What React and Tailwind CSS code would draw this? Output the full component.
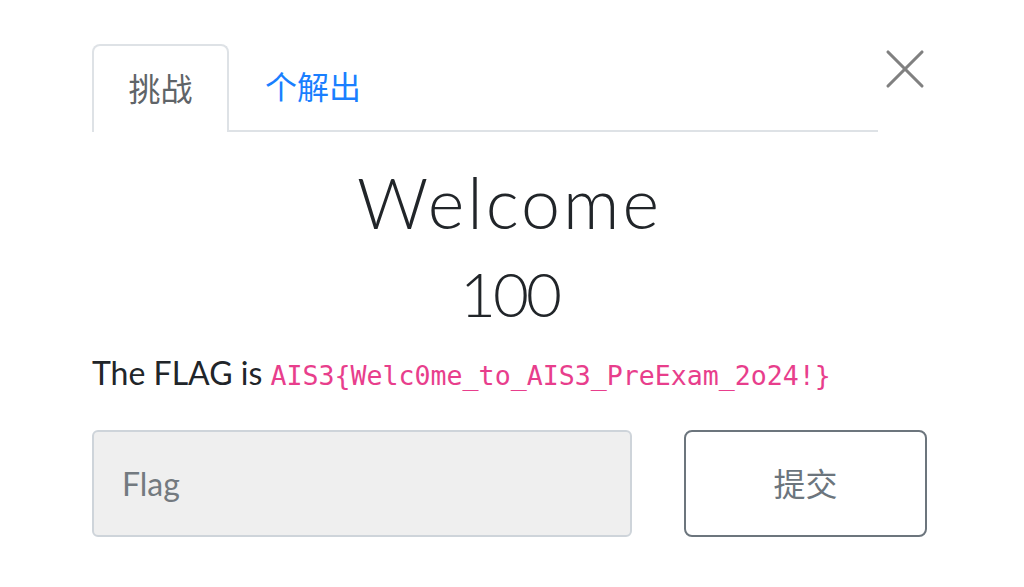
import { X } from 'lucide-react'

const lato = { fontFamily: 'Lato, "Noto Sans CJK SC", sans-serif' }

export default function App() {
  return (
    <div className="h-[587px] w-[1024px] bg-white text-[#212529]" style={lato}>
      <div className="ml-[92px] w-[835px] pt-[44px]">
        <div className="flex items-start">
          <div className="flex w-[786px] shrink-0 border-b-2 border-[#dee2e6]">
            <div className="-mb-[2px] flex h-[88px] w-[137px] items-center justify-center rounded-t-[8px] border-2 border-b-0 border-[#dee2e6] bg-white text-[32px] text-[#5f6468]">
              挑战
            </div>
            <div className="flex h-[86px] items-center pl-[36px] text-[32px] text-[#1a7fff]">
              个解出
            </div>
          </div>
          <button className="-mt-[9px] -ml-[7px] flex h-[68px] w-[68px] shrink-0 items-center justify-center text-[#808080]">
            <X size={68} strokeWidth={1.1} />
          </button>
        </div>

        <div className="mt-[28px] text-center text-[70px] font-light leading-[84px] tracking-[3px]">Welcome</div>
        <div className="mt-[9px] text-center text-[62px] font-light leading-[80px] tracking-[-3px]">100</div>

        <div className="mt-[16px] flex items-baseline text-[32px] leading-[48px]">
          <span>The FLAG is&nbsp;</span>
          <code
            className="text-[26.6px] text-[#e83e8c]"
            style={{ fontFamily: '"DejaVu Sans Mono", monospace' }}
          >
            AIS3{'{'}Welc0me_to_AIS3_PreExam_2o24!{'}'}
          </code>
        </div>

        <div className="mt-[30px] flex gap-[52px]">
          <div className="flex h-[107px] w-[540px] items-center rounded-[6px] border-2 border-[#ced4da] bg-[#efefef] pl-[28px] text-[32px] text-[#737a80]">
            Flag
          </div>
          <button className="flex h-[107px] flex-1 items-center justify-center rounded-[8px] border-2 border-[#6c757d] text-[32px] text-[#6c757d]">
            提交
          </button>
        </div>
      </div>
    </div>
  )
}
